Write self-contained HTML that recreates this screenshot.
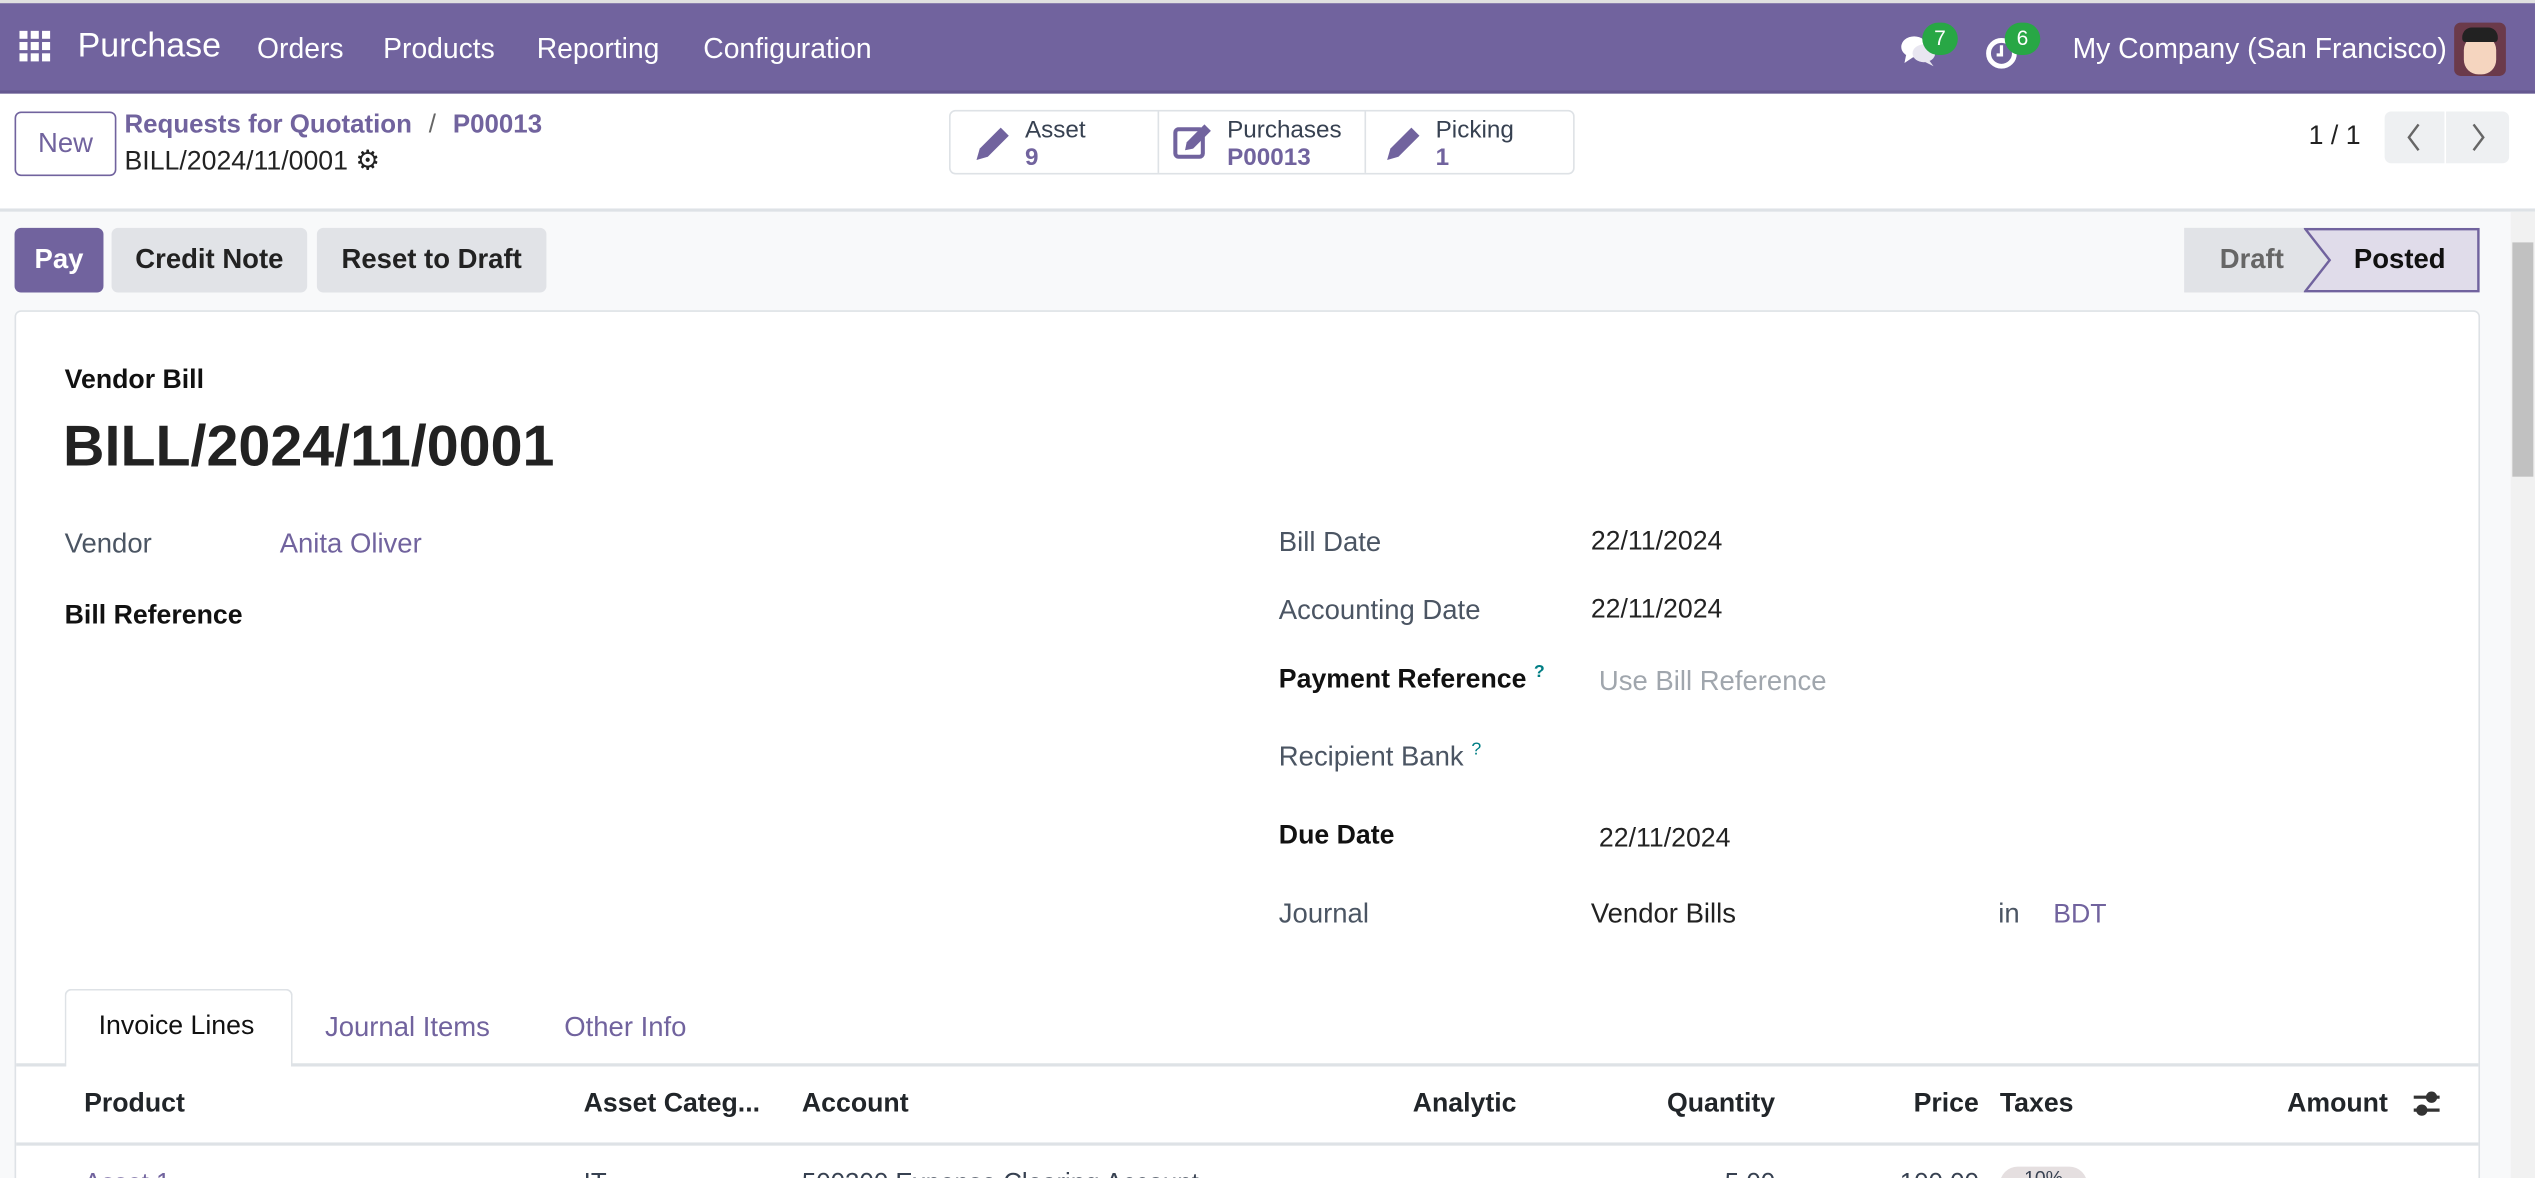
<!DOCTYPE html>
<html><head><meta charset="utf-8"><style>
*{box-sizing:border-box;margin:0;padding:0}
html,body{width:2535px;height:1178px;overflow:hidden;background:#f8f9fa}
#w{width:1568px;height:729px;transform:scale(1.6167,1.6159);transform-origin:0 0;position:relative;font-family:"Liberation Sans",sans-serif;color:#374151;font-size:16px}
.a{position:absolute;white-space:nowrap}
.nav{left:0;top:0;width:1568px;height:58px;background:#71639e;border-top:2px solid #e0e0e0;border-bottom:2px solid #655890}
.nav .a{color:#fff;font-size:17.5px;top:18px}
.cp{left:0;top:58px;width:1568px;height:73px;background:#fff;border-bottom:2px solid #dee2e6}
.btn{position:absolute;border-radius:4px;font-size:17px;display:flex;align-items:center;justify-content:center}
.p{color:#71639e}
.lbl{color:#4b5563;font-size:17px}
.b{font-weight:bold;color:#111}
.th{top:674px;font-weight:bold;color:#212529;font-size:16.5px}
</style></head><body><div id="w">
<div class="a nav">
 <svg class="a" style="left:12px;top:17px" width="20" height="20" viewBox="0 0 20 20" fill="#fff"><rect x="0" y="0" width="5" height="5"/><rect x="7" y="0" width="5" height="5"/><rect x="14" y="0" width="5" height="5"/><rect x="0" y="7" width="5" height="5"/><rect x="7" y="7" width="5" height="5"/><rect x="14" y="7" width="5" height="5"/><rect x="0" y="14" width="5" height="5"/><rect x="7" y="14" width="5" height="5"/><rect x="14" y="14" width="5" height="5"/></svg>
 <div class="a" style="left:48px;top:15px;font-size:21px">Purchase</div>
 <div class="a" style="left:159px">Orders</div>
 <div class="a" style="left:237px">Products</div>
 <div class="a" style="left:332px">Reporting</div>
 <div class="a" style="left:435px">Configuration</div>
 <svg class="a" style="left:1175px;top:19px" width="24" height="22" viewBox="0 0 24 22" fill="#fff"><ellipse cx="9" cy="8" rx="8" ry="6.5"/><path d="M4 13 L3 18 L9 14Z"/><ellipse cx="15" cy="12" rx="7" ry="5.5" fill="#e8e6f0"/><path d="M18 16 L21 20 L15 17Z" fill="#e8e6f0"/></svg>
 <div class="a" style="left:1189px;top:12px;width:22px;height:20px;border-radius:10px;background:#28a745;font-size:13px;text-align:center;line-height:20px;padding:0">7</div>
 <svg class="a" style="left:1228px;top:20px" width="22" height="22" viewBox="0 0 22 22"><circle cx="10" cy="11" r="8" fill="none" stroke="#fff" stroke-width="3"/><path d="M10 6v6h-3" stroke="#fff" stroke-width="2" fill="none"/></svg>
 <div class="a" style="left:1240px;top:12px;width:22px;height:20px;border-radius:10px;background:#28a745;font-size:13px;text-align:center;line-height:20px">6</div>
 <div class="a" style="left:1282px">My Company (San Francisco)</div>
 <div class="a" style="left:1518px;top:12px;width:32px;height:33px;border-radius:4px;background:#6b3a4a;overflow:hidden"><div style="position:absolute;left:6px;top:8px;width:20px;height:24px;border-radius:9px;background:#f5d5bf"></div><div style="position:absolute;left:5px;top:3px;width:22px;height:9px;border-radius:6px 6px 2px 2px;background:#222"></div></div>
</div>
<div class="a cp">
 <div class="btn" style="left:9px;top:11px;width:63px;height:40px;border:1.5px solid #71639e;color:#71639e;background:#fff">New</div>
 <div class="a p" style="left:77px;top:11px;font-size:16px;font-weight:bold">Requests for Quotation <span style="color:#666;font-weight:normal;margin:0 6px">/</span> P00013</div>
 <div class="a" style="left:77px;top:32px;font-size:16.5px;color:#222">BILL/2024/11/0001 <span style="font-size:17px">⚙</span></div>
 <div class="a" style="left:587px;top:10px;width:387px;height:40px;border:1.5px solid #dee2e6;border-radius:4px;background:#fff"></div>
 <div class="a" style="left:716px;top:11px;width:1px;height:38px;background:#dee2e6"></div>
 <div class="a" style="left:844px;top:11px;width:1px;height:38px;background:#dee2e6"></div>
 <svg class="a" style="left:602px;top:19px" width="24" height="24" viewBox="0 0 24 24" fill="#71639e"><path d="M17 2l5 5L9 20l-7 2 2-7z"/></svg>
 <div class="a" style="left:634px;top:14px;font-size:15px;line-height:17px;color:#374151">Asset<br><span class="p" style="font-weight:bold">9</span></div>
 <svg class="a" style="left:725px;top:17px" width="26" height="26" viewBox="0 0 26 26"><rect x="2" y="5" width="17" height="17" rx="2" fill="none" stroke="#71639e" stroke-width="2.5"/><path d="M20 2l4 4-11 11-5 1 1-5z" fill="#71639e"/></svg>
 <div class="a" style="left:759px;top:14px;font-size:15px;line-height:17px;color:#374151">Purchases<br><span class="p" style="font-weight:bold">P00013</span></div>
 <svg class="a" style="left:856px;top:19px" width="24" height="24" viewBox="0 0 24 24" fill="#71639e"><path d="M17 2l5 5L9 20l-7 2 2-7z"/></svg>
 <div class="a" style="left:888px;top:14px;font-size:15px;line-height:17px;color:#374151">Picking<br><span class="p" style="font-weight:bold">1</span></div>
 <div class="a" style="left:1428px;top:17px;font-size:16.5px;color:#222">1 / 1</div>
 <div class="a" style="left:1475px;top:11px;width:37px;height:32px;background:#eef0f2;border-radius:4px 0 0 4px"><svg width="37" height="32"><path d="M21 8l-6 8 6 8" fill="none" stroke="#666" stroke-width="1.5"/></svg></div>
 <div class="a" style="left:1513px;top:11px;width:39px;height:32px;background:#eef0f2;border-radius:0 4px 4px 0"><svg width="39" height="32"><path d="M17 8l6 8-6 8" fill="none" stroke="#666" stroke-width="1.5"/></svg></div>
</div>
<div class="btn" style="left:9px;top:141px;width:55px;height:40px;background:#71639e;color:#fff;font-weight:bold">Pay</div>
<div class="btn" style="left:69px;top:141px;width:121px;height:40px;background:#e1e3e7;color:#222;font-weight:bold">Credit Note</div>
<div class="btn" style="left:196px;top:141px;width:142px;height:40px;background:#e1e3e7;color:#222;font-weight:bold">Reset to Draft</div>
<div class="a" style="left:1351px;top:141px;width:90px;height:40px;background:#e1e3e7;color:#666;font-size:17px;line-height:40px;padding-left:22px;font-weight:bold">Draft</div>
<svg class="a" style="left:1425px;top:141px" width="109" height="40" viewBox="0 0 109 40"><path d="M1 0.8H108V39.2H1L16 20Z" fill="#e0dcea" stroke="#71639e" stroke-width="1.5"/></svg>
<div class="a" style="left:1456px;top:151px;font-size:17px;font-weight:bold;color:#111">Posted</div>
<div class="a" style="left:1553px;top:131px;width:15px;height:598px;background:#f1f1f1"></div>
<div class="a" style="left:1554px;top:150px;width:13px;height:145px;background:#c1c1c1"></div>
<div class="a" style="left:9px;top:192px;width:1525px;height:545px;background:#fff;border:1.5px solid #dee2e6;border-radius:4px"></div>
<div class="a" style="left:40px;top:226px;font-size:16.5px;font-weight:bold;color:#111">Vendor Bill</div>
<div class="a" style="left:39px;top:256px;font-size:35.5px;font-weight:bold;color:#222">BILL/2024/11/0001</div>
<div class="a lbl" style="left:40px;top:327px">Vendor</div>
<div class="a p" style="left:173px;top:327px;font-size:17px">Anita Oliver</div>
<div class="a b" style="left:40px;top:372px;font-size:16.5px">Bill Reference</div>
<div class="a lbl" style="left:791px;top:326px">Bill Date</div>
<div class="a" style="left:984px;top:326px;font-size:16.5px;color:#222">22/11/2024</div>
<div class="a lbl" style="left:791px;top:368px">Accounting Date</div>
<div class="a" style="left:984px;top:368px;font-size:16.5px;color:#222">22/11/2024</div>
<div class="a b" style="left:791px;top:410px;font-size:16.5px">Payment Reference <sup style="color:#017e84;font-size:11px">?</sup></div>
<div class="a" style="left:989px;top:412px;font-size:17px;color:#a0a6ad">Use Bill Reference</div>
<div class="a lbl" style="left:791px;top:458px">Recipient Bank <sup style="color:#017e84;font-size:11px">?</sup></div>
<div class="a b" style="left:791px;top:508px;font-size:16.5px">Due Date</div>
<div class="a" style="left:989px;top:510px;font-size:16.5px;color:#222">22/11/2024</div>
<div class="a lbl" style="left:791px;top:556px">Journal</div>
<div class="a" style="left:984px;top:556px;font-size:17px;color:#222">Vendor Bills</div>
<div class="a lbl" style="left:1236px;top:556px">in</div>
<div class="a p" style="left:1270px;top:557px;font-size:16.5px">BDT</div>
<div class="a" style="left:10px;top:658px;width:1523px;height:2px;background:#dee2e6"></div>
<div class="a" style="left:40px;top:612px;width:141px;height:48px;background:#fff;border:1.5px solid #dee2e6;border-bottom:none;border-radius:4px 4px 0 0"></div>
<div class="a" style="left:61px;top:626px;font-size:16.5px;color:#111">Invoice Lines</div>
<div class="a p" style="left:201px;top:626px;font-size:17px">Journal Items</div>
<div class="a p" style="left:349px;top:626px;font-size:17px">Other Info</div>
<div class="a th" style="left:52px">Product</div>
<div class="a th" style="left:361px">Asset Categ...</div>
<div class="a th" style="left:496px">Account</div>
<div class="a th" style="right:630px">Analytic</div>
<div class="a th" style="right:470px">Quantity</div>
<div class="a th" style="right:344px">Price</div>
<div class="a th" style="left:1237px">Taxes</div>
<div class="a th" style="right:91px">Amount</div>
<svg class="a" style="left:1492px;top:674px" width="18" height="18" viewBox="0 0 18 18" stroke="#333" stroke-width="2"><path d="M1 5h16M1 13h16"/><circle cx="12" cy="5" r="2.5" fill="#333"/><circle cx="6" cy="13" r="2.5" fill="#333"/></svg>
<div class="a" style="left:10px;top:707px;width:1523px;height:2px;background:#dee2e6"></div>
<div class="a p" style="left:52px;top:724px;font-size:16px">Asset 1</div>
<div class="a" style="left:361px;top:724px;font-size:16px">IT</div>
<div class="a" style="left:496px;top:724px;font-size:16px">500300 Expense Clearing Account</div>
<div class="a" style="right:470px;top:724px;font-size:16px">5.00</div>
<div class="a" style="right:344px;top:724px;font-size:16px">100.00</div>
<div class="a" style="left:1237px;top:722px;width:54px;height:22px;border-radius:11px;background:#e5dfe0;font-size:12px;text-align:center;line-height:14px">10%</div>
<div class="a" style="right:91px;top:724px;font-size:16px">500.00 ৳</div>
</div></body></html>
